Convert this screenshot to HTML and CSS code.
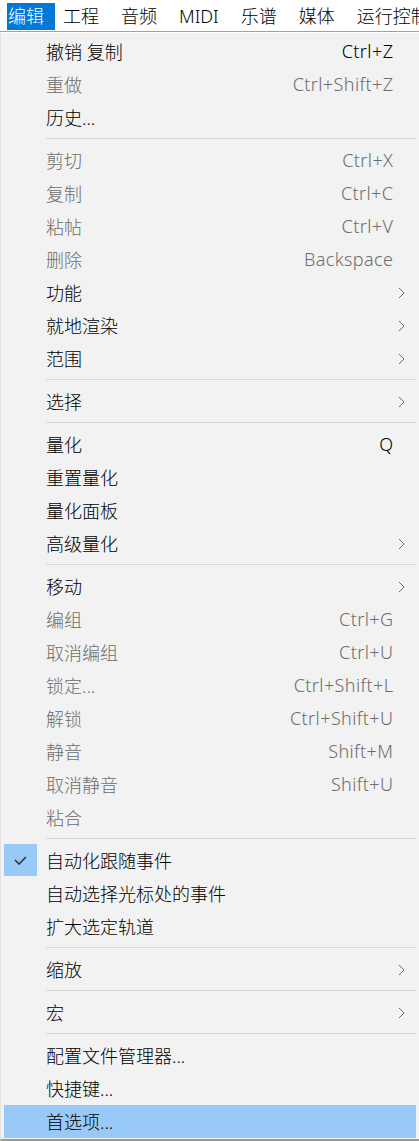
FILE: index.html
```html
<html>
<head>
<title>编辑菜单</title>
<link rel="stylesheet" href="styles.css">
</head>
<body>

<div class="menubar">
    <span class="top active">编辑</span>
    <span class="top">工程</span>
    <span class="top">音频</span>
    <span class="top">MIDI</span>
    <span class="top">乐谱</span>
    <span class="top">媒体</span>
    <span class="top">运行控制</span>
</div>

<div class="menu">
    <div class="item"><span class="label">撤销 复制</span><span class="key">Ctrl+Z</span></div>
    <div class="item off"><span class="label">重做</span><span class="key">Ctrl+Shift+Z</span></div>
    <div class="item"><span class="label">历史...</span></div>
    <div class="sep"></div>
    <div class="item off"><span class="label">剪切</span><span class="key">Ctrl+X</span></div>
    <div class="item off"><span class="label">复制</span><span class="key">Ctrl+C</span></div>
    <div class="item off"><span class="label">粘帖</span><span class="key">Ctrl+V</span></div>
    <div class="item off"><span class="label">删除</span><span class="key">Backspace</span></div>
    <div class="item"><span class="label">功能</span><span class="sub"><svg width="7" height="12" viewBox="0 0 7 12"><polyline points="1,1 6,6 1,11"/></svg></span></div>
    <div class="item"><span class="label">就地渲染</span><span class="sub"><svg width="7" height="12" viewBox="0 0 7 12"><polyline points="1,1 6,6 1,11"/></svg></span></div>
    <div class="item"><span class="label">范围</span><span class="sub"><svg width="7" height="12" viewBox="0 0 7 12"><polyline points="1,1 6,6 1,11"/></svg></span></div>
    <div class="sep"></div>
    <div class="item"><span class="label">选择</span><span class="sub"><svg width="7" height="12" viewBox="0 0 7 12"><polyline points="1,1 6,6 1,11"/></svg></span></div>
    <div class="sep"></div>
    <div class="item"><span class="label">量化</span><span class="key">Q</span></div>
    <div class="item"><span class="label">重置量化</span></div>
    <div class="item"><span class="label">量化面板</span></div>
    <div class="item"><span class="label">高级量化</span><span class="sub"><svg width="7" height="12" viewBox="0 0 7 12"><polyline points="1,1 6,6 1,11"/></svg></span></div>
    <div class="sep"></div>
    <div class="item"><span class="label">移动</span><span class="sub"><svg width="7" height="12" viewBox="0 0 7 12"><polyline points="1,1 6,6 1,11"/></svg></span></div>
    <div class="item off"><span class="label">编组</span><span class="key">Ctrl+G</span></div>
    <div class="item off"><span class="label">取消编组</span><span class="key">Ctrl+U</span></div>
    <div class="item off"><span class="label">锁定...</span><span class="key">Ctrl+Shift+L</span></div>
    <div class="item off"><span class="label">解锁</span><span class="key">Ctrl+Shift+U</span></div>
    <div class="item off"><span class="label">静音</span><span class="key">Shift+M</span></div>
    <div class="item off"><span class="label">取消静音</span><span class="key">Shift+U</span></div>
    <div class="item off"><span class="label">粘合</span></div>
    <div class="sep"></div>
    <div class="item"><span class="check"><svg width="13" height="9" viewBox="0 0 13 9"><polyline points="1,4 5,8 12,1"/></svg></span><span class="label">自动化跟随事件</span></div>
    <div class="item"><span class="label">自动选择光标处的事件</span></div>
    <div class="item"><span class="label">扩大选定轨道</span></div>
    <div class="sep"></div>
    <div class="item"><span class="label">缩放</span><span class="sub"><svg width="7" height="12" viewBox="0 0 7 12"><polyline points="1,1 6,6 1,11"/></svg></span></div>
    <div class="sep"></div>
    <div class="item"><span class="label">宏</span><span class="sub"><svg width="7" height="12" viewBox="0 0 7 12"><polyline points="1,1 6,6 1,11"/></svg></span></div>
    <div class="sep"></div>
    <div class="item"><span class="label">配置文件管理器...</span></div>
    <div class="item"><span class="label">快捷键...</span></div>
    <div class="item hot"><span class="label">首选项...</span></div>
</div>

</body>
</html>
```

FILE: styles.css
```css
body { margin: 0; font-family: "Noto Sans", "Noto Sans CJK SC", sans-serif; font-size: 18px; font-weight: 300; background: #f2f2f2; color: #000; overflow: hidden; }
.menubar { display: flex; height: 31px; padding: 0 0 0 7px; background: #fff; border-bottom: 1px solid #a0a0a0; white-space: nowrap; overflow: hidden; }
.top { display: flex; align-items: center; height: 26px; margin-top: 3px; padding: 0 11px 1px 1px; margin-right: 10px; line-height: 1; }
.active { background: #0078d7; color: #fff; margin-right: 7px; }
.menu { display: flex; flex-direction: column; padding: 2px 3px 1px 3px; border-top: 1px solid #fff; border-left: 1px solid #e3e3e3; border-bottom: 2px solid #9a9a9a; }
.item { position: relative; display: flex; align-items: center; height: 33px; box-sizing: border-box; padding: 0 23px 2px 42px; }
.item.off { color: #6d6d6d; }
.item.hot { background: #99c9f6; }
.label { flex: 1; white-space: nowrap; }
.key { white-space: nowrap; letter-spacing: 0.4px; margin-right: -0.4px; }
.sub { display: flex; align-items: center; margin-right: -12px; padding-top: 2px; }
.sub svg polyline { fill: none; stroke: #6d6d6d; stroke-width: 1; }
.check { position: absolute; left: 0; top: 0; width: 33px; height: 32px; background: #99c9f6; display: flex; align-items: center; justify-content: center; }
.check svg polyline { fill: none; stroke: #333; stroke-width: 1.6; }
.sep { height: 1px; margin: 4px 0 5px 42px; background: #d7d7d7; }
```
